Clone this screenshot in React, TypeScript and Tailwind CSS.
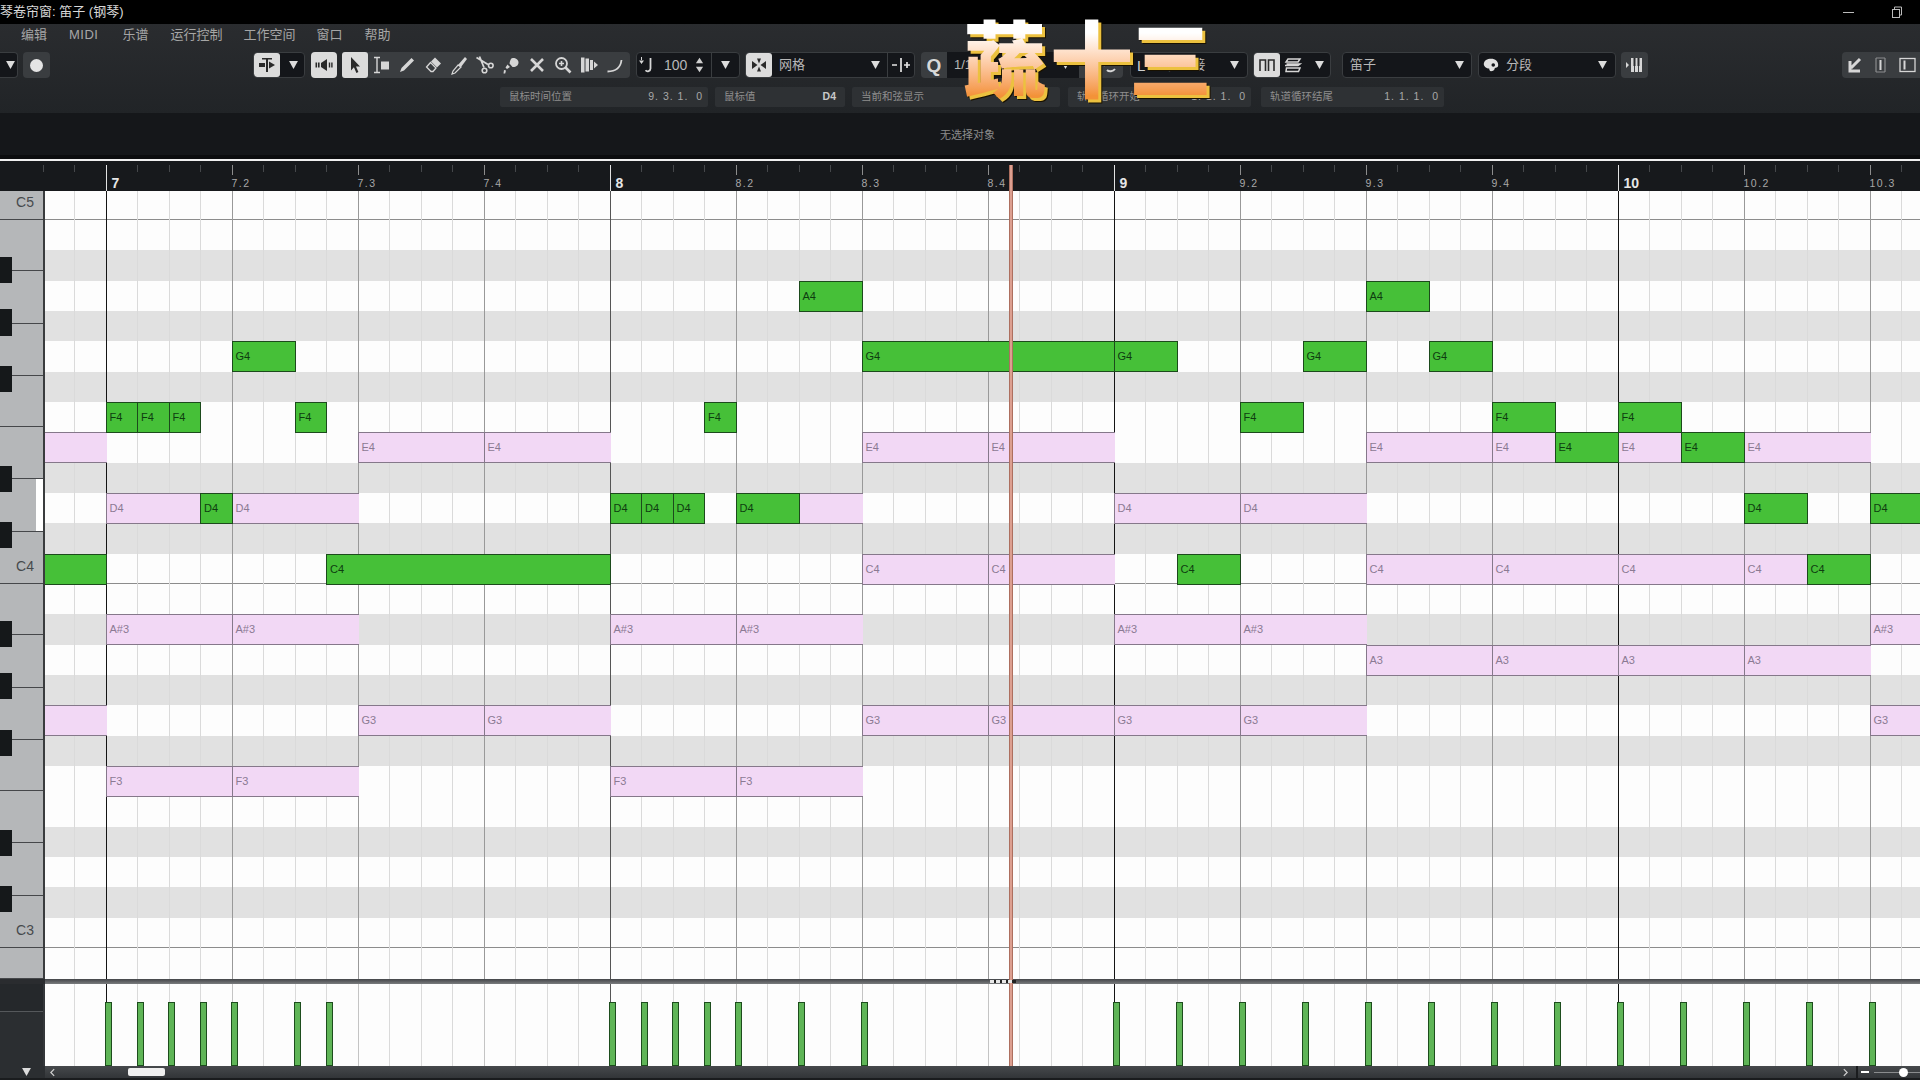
import React from "react";

const FONT = "font-['Liberation_Sans','Noto_Sans_CJK_SC',sans-serif]";
const STEP = 31.5;
const ROW = 30.333;
const X0 = 60.5;

type N = [number, number, number, string, boolean?];
const g = true;
const notes: N[] = [
  [64, -2, 0, ""], [64, 8, 12, "E4"], [64, 12, 16, "E4"], [64, 24, 28, "E4"], [64, 28, 32, "E4"], [64, 40, 44, "E4"], [64, 44, 46, "E4"], [64, 48, 50, "E4"], [64, 52, 56, "E4"],
  [62, 0, 3, "D4"], [62, 4, 8, "D4"], [62, 22, 24, ""], [62, 32, 36, "D4"], [62, 36, 40, "D4"],
  [60, 24, 28, "C4"], [60, 28, 32, "C4"], [60, 40, 44, "C4"], [60, 44, 48, "C4"], [60, 48, 52, "C4"], [60, 52, 54, "C4"],
  [58, 0, 4, "A#3"], [58, 4, 8, "A#3"], [58, 16, 20, "A#3"], [58, 20, 24, "A#3"], [58, 32, 36, "A#3"], [58, 36, 40, "A#3"], [58, 56, 60, "A#3"],
  [57, 40, 44, "A3"], [57, 44, 48, "A3"], [57, 48, 52, "A3"], [57, 52, 56, "A3"],
  [55, -2, 0, ""], [55, 8, 12, "G3"], [55, 12, 16, "G3"], [55, 24, 28, "G3"], [55, 28, 32, "G3"], [55, 32, 36, "G3"], [55, 36, 40, "G3"], [55, 56, 60, "G3"],
  [53, 0, 4, "F3"], [53, 4, 8, "F3"], [53, 16, 20, "F3"], [53, 20, 24, "F3"],
  [69, 22, 24, "A4", g], [69, 40, 42, "A4", g],
  [67, 4, 6, "G4", g], [67, 24, 32, "G4", g], [67, 32, 34, "G4", g], [67, 38, 40, "G4", g], [67, 42, 44, "G4", g],
  [65, 0, 1, "F4", g], [65, 1, 2, "F4", g], [65, 2, 3, "F4", g], [65, 6, 7, "F4", g], [65, 19, 20, "F4", g], [65, 36, 38, "F4", g], [65, 44, 46, "F4", g], [65, 48, 50, "F4", g],
  [64, 46, 48, "E4", g], [64, 50, 52, "E4", g],
  [62, 3, 4, "D4", g], [62, 16, 17, "D4", g], [62, 17, 18, "D4", g], [62, 18, 19, "D4", g], [62, 20, 22, "D4", g], [62, 52, 54, "D4", g], [62, 56, 60, "D4", g],
  [60, -2, 0, "", g], [60, 7, 16, "C4", g], [60, 34, 36, "C4", g], [60, 54, 56, "C4", g],
];
const velocity = [0, 1, 2, 3, 4, 6, 7, 16, 17, 18, 19, 20, 22, 24, 32, 34, 36, 38, 40, 42, 44, 46, 48, 50, 52, 54, 56];
const steps = Array.from({ length: 61 }, (_, i) => i - 2);
const pitches = Array.from({ length: 26 }, (_, i) => 72 - i);
const blackPitch = new Set([1, 3, 6, 8, 10]);

type K = { h: string; label?: string; black?: string; active?: boolean };
const octave = (label: string, active = false): K[] => [
  { h: "h-[51px]", black: "top-[36.7px]" },
  { h: "h-[52.7px]", black: "top-[38px]" },
  { h: "h-[52.3px]", black: "top-[42px]" },
  { h: "h-[51px]" },
  { h: "h-[52px]", black: "top-[38.7px]" },
  { h: "h-[52.7px]", black: "top-[43px]", active },
  { h: "h-[52.3px]", label },
];
const keys: K[] = [{ h: "h-[29px]", label: "C5" }, ...octave("C4", true), ...octave("C3"), { h: "h-[31px]" }];

function Tri({ className = "" }: { className?: string }) {
  return (
    <svg viewBox="0 0 10 9" className={`w-[9px] h-[8px] ${className}`}>
      <polygon points="0,0 10,0 5,9" fill="#dcdcdc" />
    </svg>
  );
}

function Ico({ children, dark = false }: { children: React.ReactNode; dark?: boolean }) {
  return (
    <svg viewBox="0 0 20 20" className={`w-[20px] h-[20px] ${dark ? "text-[#2a2a2a]" : "text-[#d6d6d6]"}`} fill="currentColor" stroke="none">
      {children}
    </svg>
  );
}

function Cell({ children, light = false, w = "w-[26px]" }: { children: React.ReactNode; light?: boolean; w?: string }) {
  return (
    <div className={`${w} h-full flex items-center justify-center shrink-0 ${light ? "bg-[#dcdcdc] rounded-[3px]" : ""}`}>{children}</div>
  );
}

const box = "h-[26px] flex items-center shrink-0 bg-[#14161a] border border-[#3a3d40] rounded-[4px] overflow-hidden";
const mid = "h-[26px] flex items-center shrink-0 bg-[#3a3d40] rounded-[4px]";

function Field({ w, ml, label, value, bold }: { w: string; ml: string; label: string; value?: string; bold?: boolean }) {
  return (
    <div className={`${w} ${ml} h-[20px] shrink-0 bg-[#2e3134] rounded-[2px] flex items-center justify-between pl-[9px] pr-[5px] text-[10.5px] text-[#8e8e8e]`}>
      <span>{label}</span>
      {value && <span className={`whitespace-pre ${bold ? "font-bold text-[#c8c8c8] pr-[4px]" : "text-[#a8a8a8] tracking-[1px]"}`}>{value}</span>}
    </div>
  );
}

function Columns({ lane = false }: { lane?: boolean }) {
  return (
    <div className="absolute inset-0 flex ml-[-2.5px]">
      {steps.map((s) => {
        const isBar = s % 16 === 0;
        const isBeat = s % 4 === 0;
        const barDark = s === 0 || s === 32 || s === 48;
        const cls = isBar
          ? barDark ? "border-[#141414]" : "border-[#555555]"
          : isBeat
            ? lane ? "border-[#c4c4c4]" : "border-[#999999]"
            : "border-[#dadada]";
        return <div key={s} className={`w-[31.5px] h-full shrink-0 border-l ${cls}`} />;
      })}
    </div>
  );
}

function Logo() {
  const c = "block bg-clip-text text-transparent bg-linear-to-b from-white from-30% to-[#f39238] to-87% [filter:drop-shadow(3px_3px_0_#ecc13f)_drop-shadow(1px_1px_0_#191100)]";
  return (
    <div className="absolute left-[963px] top-0 flex text-[83px] leading-[110px] font-black font-['Noto_Sans_CJK_SC',sans-serif]">
      <span className={c}>蔬</span>
      <span className={`${c} ml-[4px]`}>十</span>
      <span className={`${c} ml-[-4px]`}>三</span>
    </div>
  );
}

export default function App() {
  return (
    <div className={`relative w-[1920px] h-[1080px] overflow-hidden bg-black flex flex-col ${FONT}`}>
      {/* Title bar */}
      <div className="h-[24px] shrink-0 bg-black flex items-center justify-between pr-[17px] text-[13px] text-[#d8d8d8]">
        <span>琴卷帘窗: 笛子 (钢琴)</span>
        <div className="flex items-center gap-[37px]">
          <div className="w-[11px] h-px bg-[#bbbbbb]" />
          <svg viewBox="0 0 12 12" className="w-[12px] h-[12px]" fill="none" stroke="#bbbbbb">
            <rect x="1.5" y="3.5" width="7" height="8" />
            <path d="M3.5 3.5V1h7v8H8.5" />
          </svg>
        </div>
      </div>

      {/* Toolbar */}
      <div className="h-[89px] shrink-0 bg-linear-to-b from-[#2a2c2f] to-[#212427] flex flex-col">
        <div className="h-[20px] pt-[1px] flex items-center pl-[21px] gap-[22px] text-[13px] text-[#a6a6a6]">
          <span>编辑</span>
          <span className="tracking-[0.5px]">MIDI</span>
          <span className="ml-[2px]">乐谱</span>
          <span>运行控制</span>
          <span className="ml-[-1px]">工作空间</span>
          <span className="ml-[-1px]">窗口</span>
          <span>帮助</span>
        </div>

        <div className="h-[26px] mt-[8px] flex items-center text-[13px] text-[#b8b8b8]">
          <div className={`${box} w-[18px] justify-end pr-[2px] border-l-0 rounded-l-none`}>
            <Tri />
          </div>
          <div className={`${mid} w-[27px] ml-[5px] justify-center`}>
            <div className="w-[13px] h-[13px] rounded-full bg-[#e4e4e4]" />
          </div>

          <div className={`${box} w-[52px] ml-[203px]`}>
            <Cell light>
              <Ico dark>
                <path d="M5 3h10v1.6h-4V17H9V4.6H5z" />
                <path d="M2 8h6v4H2z" />
                <path d="M12 6.5l6 3.5-6 3.5z" />
              </Ico>
            </Cell>
            <Cell><Tri /></Cell>
          </div>

          <div className="w-[26px] h-[26px] ml-[6px] bg-[#dcdcdc] rounded-[4px] flex items-center justify-center shrink-0">
            <Ico dark>
              <path d="M1.5 7.5h1.6v5H1.5zM4 7.5h1.6v5H4zM7 8l6-4v12l-6-4z" />
              <path d="M14.8 7.5h1.4v5h-1.4zM17.2 7.5h1.4v5h-1.4z" />
            </Ico>
          </div>

          <div className={`${mid} w-[288px] ml-[5px]`}>
            <Cell light>
              <Ico dark>
                <path d="M6 2l9 9.5h-4l2.4 5.5-2 1-2.5-5.7L6 15.5z" />
              </Ico>
            </Cell>
            <Cell>
              <Ico>
                <path d="M3 2.5h6M6 2.5v15M3 17.5h6" fill="none" stroke="currentColor" strokeWidth="1.4" />
                <rect x="10" y="6.5" width="8" height="8" />
              </Ico>
            </Cell>
            <Cell>
              <Ico>
                <path d="M14.5 3l2.5 2.5L7 15.5l-4 1.5 1.5-4z" />
              </Ico>
            </Cell>
            <Cell>
              <Ico>
                <path d="M12 2.5l6 6-4 4-6-6z" />
                <path d="M7.5 7.5l5.5 5.5-3 3.5H8L3.5 12z" fill="none" stroke="currentColor" strokeWidth="1.3" />
              </Ico>
            </Cell>
            <Cell>
              <Ico>
                <path d="M16 2l2 2-6 8-3-2z" />
                <path d="M9 10l3 2-6 6-3 1 1-3z" fill="none" stroke="currentColor" strokeWidth="1.2" />
              </Ico>
            </Cell>
            <Cell>
              <Ico>
                <path d="M1.5 2.5L13 9.5M4.5 1.5L9 12.5" fill="none" stroke="currentColor" strokeWidth="1.8" />
                <circle cx="9.5" cy="15.5" r="2.3" fill="none" stroke="currentColor" strokeWidth="1.6" />
                <circle cx="15.8" cy="10.5" r="2.3" fill="none" stroke="currentColor" strokeWidth="1.6" />
              </Ico>
            </Cell>
            <Cell>
              <Ico>
                <path d="M12 3c3 0 5.5 2 5.5 4.5 0 3-3 5-6 4.5L8.5 8.5C9 5 10 3 12 3z" />
                <path d="M6.5 9.5L9 12l-3 2-1.500-1.500zM3 15l2 .5-.8 3H2.500z" />
              </Ico>
            </Cell>
            <Cell>
              <Ico>
                <path d="M4 4l12 12M16 4L4 16" fill="none" stroke="currentColor" strokeWidth="2.6" />
              </Ico>
            </Cell>
            <Cell>
              <Ico>
                <circle cx="8.5" cy="8.5" r="5.5" fill="none" stroke="currentColor" strokeWidth="1.8" />
                <path d="M12.5 12.5l5 5" fill="none" stroke="currentColor" strokeWidth="2.6" />
                <path d="M6 8.5h5M8.5 6v5" fill="none" stroke="currentColor" strokeWidth="1.6" />
              </Ico>
            </Cell>
            <Cell>
              <Ico>
                <path d="M2 2.5h3.500v15H2zM6.500 3.500H10v13H6.500zM11 5h3v10h-3zM15 6.500l4 3.500-4 3.500z" />
              </Ico>
            </Cell>
            <Cell>
              <Ico>
                <path d="M2.5 16.5c7 0 13-3 14-11.500" fill="none" stroke="currentColor" strokeWidth="1.8" />
              </Ico>
            </Cell>
          </div>

          <div className={`${box} w-[104px] ml-[6px]`}>
            <Ico>
              <path d="M2 5.500L4.500 9 7 5.500zM4 2h1v4H4z" />
              <path d="M13.500 3v10.500a2.800 2.800 0 0 1-5 1.700" fill="none" stroke="currentColor" strokeWidth="1.800" />
            </Ico>
            <span className="ml-[7px] text-[14px]">100</span>
            <svg viewBox="0 0 10 18" className="w-[9px] h-[18px] ml-[8px]" fill="#cfcfcf">
              <polygon points="1,7 9,7 5,1" />
              <polygon points="1,11 9,11 5,17" />
            </svg>
            <div className="w-px h-full bg-[#3a3d40] ml-[7px]" />
            <div className="flex-1 flex justify-center"><Tri /></div>
          </div>

          <div className={`${box} w-[170px] ml-[5px]`}>
            <Cell light>
              <Ico dark>
                <path d="M3 6l5.500 4L3 14zM17 6l-5.500 4 5.500 4zM8 3.500h4L10 8.500zM8 16.500h4L10 11.500z" />
              </Ico>
            </Cell>
            <span className="ml-[7px] text-[13px]">网格</span>
            <div className="ml-auto mr-[7px]"><Tri /></div>
            <div className="w-[27px] h-full border-l border-[#3a3d40] flex items-center justify-center shrink-0">
              <svg viewBox="0 0 20 16" className="w-[20px] h-[16px]">
                <path d="M1 8h5M10 1v14M13 8h6M16 5v6" fill="none" stroke="#e4e4e4" strokeWidth="1.700" />
              </svg>
            </div>
          </div>

          <div className={`${mid} w-[202px] ml-[6px] overflow-hidden`}>
            <div className="w-[26px] flex justify-center text-[19px] leading-none font-bold text-[#d8d8d8]">Q</div>
            <div className="w-[132px] h-full bg-[#14161a] flex items-center pl-[7px] text-[13px]">
              <span>1/16</span>
              <div className="ml-auto mr-[9px]"><Tri /></div>
            </div>
            <div className="flex-1 flex justify-end pr-[3px]">
              <Ico>
                <path d="M4 11c1-5 9-6 11-1H6M15 14c-2 2.500-6 3-8 1" fill="none" stroke="currentColor" strokeWidth="2" />
              </Ico>
            </div>
          </div>

          <div className={`${box} w-[118px] ml-[7px]`}>
            <span className="ml-[6px] text-[15px] leading-none text-[#d0d0d0]">L</span>
            <span className="ml-[8px] text-[13px]">量化旋接</span>
            <div className="ml-auto mr-[8px]"><Tri /></div>
          </div>

          <div className={`${box} w-[78px] ml-[5px]`}>
            <Cell light>
              <Ico dark>
                <path d="M3 16V5h5.500v11M11.500 16V5H17v11" fill="none" stroke="currentColor" strokeWidth="1.600" />
              </Ico>
            </Cell>
            <Cell>
              <Ico>
                <path d="M5 4h12l-2 3H3zM3.500 9H17l-2 1.500H2M3.500 13H17l-1.500 3.500H3z" fill="none" stroke="currentColor" strokeWidth="1.500" />
              </Ico>
            </Cell>
            <Cell><Tri /></Cell>
          </div>

          <div className={`${box} w-[130px] ml-[11px] pl-[7px] pr-[7px] justify-between`}>
            <span className="text-[13px]">笛子</span>
            <Tri />
          </div>

          <div className={`${box} w-[138px] ml-[6px] pl-[3px] pr-[8px]`}>
            <svg viewBox="0 0 20 20" className="w-[18px] h-[18px]">
              <path d="M10 3c5 0 8 3 8 7 0 2-1 3-3 3l-1 1c0 2-2 3-4 3-1 0-2-1-2-3-3 0-6-2-6-5 0-4 4-6 8-6z" fill="#e0e0e0" />
              <circle cx="12.500" cy="10" r="2" fill="#14161a" />
            </svg>
            <span className="ml-[6px] text-[13px]">分段</span>
            <div className="ml-auto"><Tri /></div>
          </div>

          <div className={`${mid} w-[27px] ml-[5px] justify-center`}>
            <svg viewBox="0 0 20 20" className="w-[20px] h-[20px]">
              <path d="M1 7l3 3-3 3zM6 3h3v14H6zM10 3h3v14h-3zM14 3h3v14h-3z" fill="#d6d6d6" />
              <path d="M8.500 3h2v8h-2zM12.500 3h2v8h-2z" fill="#2a2c2f" />
            </svg>
          </div>

          <div className={`${mid} w-[78px] ml-auto rounded-r-none`}>
            <Cell>
              <Ico>
                <path d="M15 4L6 13M5 6v10h10" fill="none" stroke="currentColor" strokeWidth="3" />
              </Ico>
            </Cell>
            <Cell>
              <Ico>
                <path d="M5 3h9M5 17h9M5 3v14M14 3v14" fill="none" stroke="#8a8c8e" strokeWidth="1.200" />
                <rect x="8.500" y="5" width="2" height="10" />
              </Ico>
            </Cell>
            <Cell>
              <Ico>
                <rect x="3" y="3.500" width="15" height="13" fill="none" stroke="currentColor" strokeWidth="1.300" />
                <rect x="6.500" y="5.500" width="2" height="9" />
              </Ico>
            </Cell>
          </div>
        </div>

        <div className="h-[20px] mt-[9px] flex items-center">
          <Field w="w-[208px]" ml="ml-[500px]" label="鼠标时间位置" value="9. 3. 1.  0" />
          <Field w="w-[130px]" ml="ml-[7px]" label="鼠标值" value="D4" bold />
          <Field w="w-[208px]" ml="ml-[7px]" label="当前和弦显示" />
          <Field w="w-[183px]" ml="ml-[8px]" label="轨道循环开始" value="1. 1. 1.  0" />
          <Field w="w-[183px]" ml="ml-[10px]" label="轨道循环结尾" value="1. 1. 1.  0" />
        </div>
      </div>

      {/* Info line */}
      <div className="h-[42px] shrink-0 bg-[#15171a] flex items-center justify-center text-[11px] text-[#8c8c8c] pl-[15px] pt-[2px]">无选择对象</div>
      <div className="h-[4px] shrink-0 bg-[#0c0d0f]" />
      <div className="h-[2px] shrink-0 bg-[#f0f0f0]" />

      {/* Ruler */}
      <div className="h-[30px] shrink-0 bg-[#17191c] flex pl-[42.5px] overflow-hidden">
        {steps.map((s) => {
          const bar = 7 + Math.floor(s / 16);
          const isBar = s % 16 === 0;
          const isBeat = s % 4 === 0;
          return (
            <div key={s} className="w-[31.5px] h-full shrink-0 flex flex-col pt-[4px] whitespace-nowrap">
              {isBar ? (
                <div className="flex-1 border-l border-[#e2e2e2] pl-[5px] flex items-end text-[14px] leading-[16px] font-bold text-[#e6e6e6]">{bar}</div>
              ) : (
                <>
                  <div className={`w-px ${isBeat ? "h-[10px] bg-[#8c8c8c]" : "h-[7px] bg-[#45474a]"}`} />
                  {isBeat && s > 0 && (
                    <div className="mt-auto text-[10.5px] leading-[16px] tracking-[1.5px] text-[#a8a8a8]">{`${bar}.${((s + 16) % 16) / 4 + 1}`}</div>
                  )}
                </>
              )}
            </div>
          );
        })}
      </div>

      {/* Editor */}
      <div className="h-[788px] shrink-0 flex">
        <div className="w-[45px] shrink-0 border-r-[2px] border-[#3a3c3e] flex flex-col overflow-hidden">
          {keys.map((k, i) => (
            <div key={i} className={`${k.h} shrink-0 relative bg-[#b5b7b9] border-b border-[#45474a] flex items-end justify-end pb-[9px] pr-[9px] text-[14px] leading-[16px] text-[#474a4d]`}>
              {k.label}
              {k.black && <div className={`absolute left-0 z-10 ${k.black} w-[12px] h-[26.5px] bg-[#15181a]`} />}
              {k.active && <div className="absolute right-0 top-0 bottom-0 w-[7px] bg-white" />}
            </div>
          ))}
        </div>
        <div className="flex-1 relative overflow-hidden bg-[#fdfdfd]">
          <div className="flex flex-col">
            {pitches.map((p, i) => {
              const black = blackPitch.has(((p % 12) + 12) % 12);
              const isC = p % 12 === 0;
              return (
                <div
                  key={p}
                  className={`shrink-0 ${i === 0 ? "h-[29px]" : "h-[30.333px]"} ${black ? "bg-[#e1e1e1]" : "bg-[#fdfdfd]"} ${isC ? "border-b border-[#8c8c8c]" : ""}`}
                />
              );
            })}
          </div>
          <Columns />
          {notes.map((n, i) => {
            const [pitch, a, b, label, green] = n;
            return (
              <div
                key={i}
                style={{ left: X0 + a * STEP, width: (b - a) * STEP + 1, top: (72 - pitch) * ROW - 1.3, height: ROW + 0.7 }}
                className={`absolute flex items-center pl-[3px] text-[11px] leading-none overflow-hidden ${
                  green
                    ? "bg-[#46c038] border border-[#1c4a1c] text-[#0e3d10] font-medium"
                    : "bg-[#f2d8f5] border-y border-l border-[#85788a] text-[#8b7a93]"
                }`}
              >
                {label}
              </div>
            );
          })}
        </div>
      </div>

      {/* Splitter */}
      <div className="h-[5px] shrink-0 flex">
        <div className="w-[45px] bg-[#2a2c2f] shrink-0" />
        <div className="flex-1 bg-linear-to-b from-[#444649] to-[#7a7c7e]" />
      </div>

      {/* Velocity lane */}
      <div className="h-[82px] shrink-0 flex">
        <div className="w-[45px] shrink-0 flex flex-col bg-[#2b2e31] border-r-[2px] border-[#34373a]">
          <div className="h-[28px] bg-[#25282b] border-b border-[#55585b]" />
        </div>
        <div className="flex-1 relative overflow-hidden bg-[#fdfdfd]">
          <Columns lane />
          {velocity.map((s) => (
            <div
              key={s}
              style={{ left: X0 + s * STEP - 0.5 }}
              className="absolute top-[18px] bottom-0 w-[7px] bg-[#5fb557] border border-[#1d4d1d]"
            />
          ))}
        </div>
      </div>

      {/* Scroll bar */}
      <div className="h-[14px] shrink-0 flex pb-[2px] bg-[#1a1c1e]">
        <div className="w-[45px] shrink-0 bg-[#2b2e31] flex items-center justify-center pl-[7px]">
          <Tri />
        </div>
        <div className="flex-1 bg-linear-to-b from-[#46494c] to-[#323538] flex items-center">
          <svg viewBox="0 0 6 10" className="w-[5px] h-[9px] ml-[5px]" fill="none" stroke="#cfcfcf" strokeWidth="1.500">
            <path d="M5 1L1 5l4 4" />
          </svg>
          <div className="w-[37px] h-[8px] ml-[73px] bg-[#efefef] rounded-[2px]" />
          <svg viewBox="0 0 6 10" className="w-[5px] h-[9px] ml-auto" fill="none" stroke="#cfcfcf" strokeWidth="1.500">
            <path d="M1 1l4 4-4 4" />
          </svg>
          <div className="w-[2px] h-full bg-[#1a1c1e] ml-[8px]" />
          <div className="w-[8px] h-[2px] bg-white ml-[3px]" />
          <div className="relative w-[46px] h-px bg-[#8a8c8e] ml-[5px] shrink-0">
            <div className="absolute left-[25px] top-[-4px] w-[9px] h-[9px] rounded-full bg-white" />
          </div>
        </div>
      </div>

      {/* Playhead */}
      <div className="absolute left-[1009px] top-[165px] w-[4px] h-[901px] bg-[#dc9f90] border-x border-[#ad6f5f]" />

      {/* Splitter grip */}
      <div className="absolute left-[990px] top-[980px] w-[26px] h-[3px] flex gap-[2px] bg-[#222]">
        <div className="w-[4px] bg-[#e8e8e8]" />
        <div className="w-[4px] bg-[#e8e8e8]" />
        <div className="w-[4px] bg-[#e8e8e8]" />
        <div className="w-[4px] bg-[#e8e8e8]" />
      </div>

      <Logo />
    </div>
  );
}
